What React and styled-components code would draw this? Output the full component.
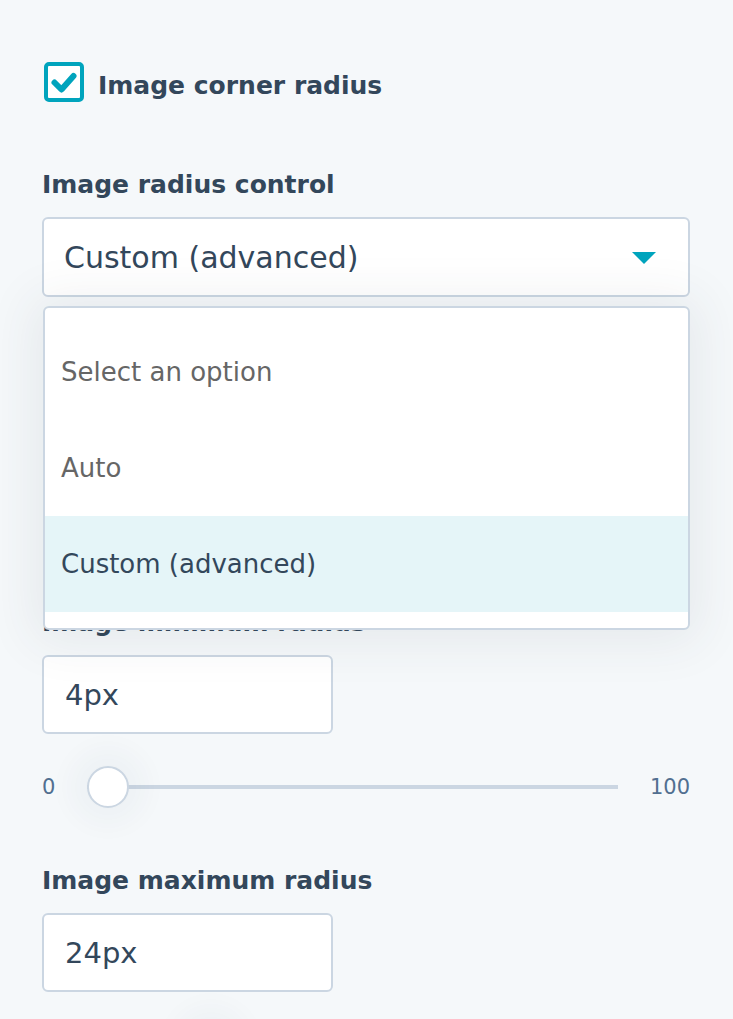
import React from "react";
import styled, { createGlobalStyle } from "styled-components";

const GlobalStyle = createGlobalStyle`
  body {
    margin: 0;
    background-color: #f5f8fa;
    font-family: "DejaVu Sans", "Noto Sans", sans-serif;
    color: #33475b;
  }
`

const Panel = styled.div`
  padding: 62px 43px 0 42px;
  display: flex;
  flex-direction: column;
`

const CheckRow = styled.label`
  display: flex;
  align-items: center;
  gap: 14px;
  height: 40px;
  margin-left: 2px;
`

const CheckBox = styled.span`
  box-sizing: border-box;
  width: 40px;
  height: 40px;
  border: 4px solid #00a4bd;
  border-radius: 5px;
  background: #fff;
  display: flex;
  align-items: center;
  justify-content: center;
`

const CheckText = styled.span`
  font-size: 25px;
  font-weight: 700;
  line-height: 40px;
  padding-top: 8px;
`

const Field = styled.div`
  display: flex;
  flex-direction: column;
  margin-top: ${(p) => p.top}px;
`

const Label = styled.div`
  font-size: 25px;
  font-weight: 700;
  line-height: 32px;
  margin-bottom: 16px;
`

const SelectWrap = styled.div`
  position: relative;
`

const SelectBox = styled.div`
  box-sizing: border-box;
  height: 80px;
  border: 2px solid #cbd6e2;
  border-radius: 6px;
  background: #fff;
  display: flex;
  align-items: center;
  justify-content: space-between;
  padding: 0 32px 0 20px;
  font-size: 30px;
`

const Caret = styled.span`
  width: 0;
  height: 0;
  border-left: 12px solid transparent;
  border-right: 12px solid transparent;
  border-top: 12px solid #00a4bd;
  margin-top: 2px;
`

const Menu = styled.ul`
  position: absolute;
  top: calc(100% + 9px);
  left: 1px;
  right: 0;
  margin: 0;
  padding: 16px 0;
  list-style: none;
  background: #fff;
  border: 2px solid #cbd6e2;
  border-radius: 6px;
  box-shadow: 0 2px 50px 10px rgba(45, 62, 80, 0.08);
  z-index: 2;
`

const Option = styled.li`
  height: 96px;
  display: flex;
  align-items: center;
  padding-left: 16px;
  font-size: 26px;
  color: ${(p) => (p.selected ? "#33475b" : "#666666")};
  background: ${(p) => (p.selected ? "#e5f5f8" : "transparent")};
`

const TextInput = styled.div`
  box-sizing: border-box;
  width: 291px;
  height: 79px;
  border: 2px solid #cbd6e2;
  border-radius: 6px;
  background: #fff;
  display: flex;
  align-items: center;
  padding-left: 21px;
  font-size: 29px;
`

const SliderRow = styled.div`
  display: flex;
  align-items: center;
  gap: 32px;
  height: 44px;
  margin-top: 31px;
`

const SliderNum = styled.span`
  font-size: 21px;
  color: #516f90;
  width: ${(p) => p.w}px;
  text-align: ${(p) => p.align};
`

const Track = styled.div`
  position: relative;
  flex: 1;
  height: 44px;
  display: flex;
  align-items: center;
  &::before {
    content: "";
    display: block;
    width: 100%;
    height: 4px;
    background: #cbd6e2;
  }
`

const Thumb = styled.span`
  position: absolute;
  top: 1px;
  box-sizing: border-box;
  width: 42px;
  height: 42px;
  border: 2px solid #cbd6e2;
  border-radius: 50%;
  background: #fff;
  box-shadow: 0 0 26px 18px rgba(45, 62, 80, 0.03);
`

const checkMark = (
  <svg width="28" height="24" viewBox="0 0 28 24">
    <path
      d="M4.5 12.5 L11.5 19.5 L23.5 6"
      fill="none"
      stroke="#00a4bd"
      strokeWidth="6"
      strokeLinecap="round"
      strokeLinejoin="round"
    />
  </svg>
)

const Slider = ({ pos }) => (
  <SliderRow>
    <SliderNum w={13} align="left">0</SliderNum>
    <Track>
      <Thumb style={{ left: `calc((100% - 42px) * ${pos})` }} />
    </Track>
    <SliderNum w={40} align="right">100</SliderNum>
  </SliderRow>
)

const options = ["Select an option", "Auto", "Custom (advanced)"]

const App = () => {
  const selected = "Custom (advanced)"
  return (
    <>
      <GlobalStyle />
      <Panel>
        <CheckRow>
          <CheckBox>{checkMark}</CheckBox>
          <CheckText>Image corner radius</CheckText>
        </CheckRow>

        <Field top={67}>
          <Label>Image radius control</Label>
          <SelectWrap>
            <SelectBox>
              <span>{selected}</span>
              <Caret />
            </SelectBox>
            <Menu>
              {options.map((o) => (
                <Option key={o} selected={o === selected}>{o}</Option>
              ))}
            </Menu>
          </SelectWrap>
        </Field>

        <Field top={310}>
          <Label>Image minimum radius</Label>
          <TextInput>4px</TextInput>
          <Slider pos={0} />
        </Field>

        <Field top={56}>
          <Label>Image maximum radius</Label>
          <TextInput>24px</TextInput>
          <Slider pos={0.21} />
        </Field>
      </Panel>
    </>
  )
}

export default App
